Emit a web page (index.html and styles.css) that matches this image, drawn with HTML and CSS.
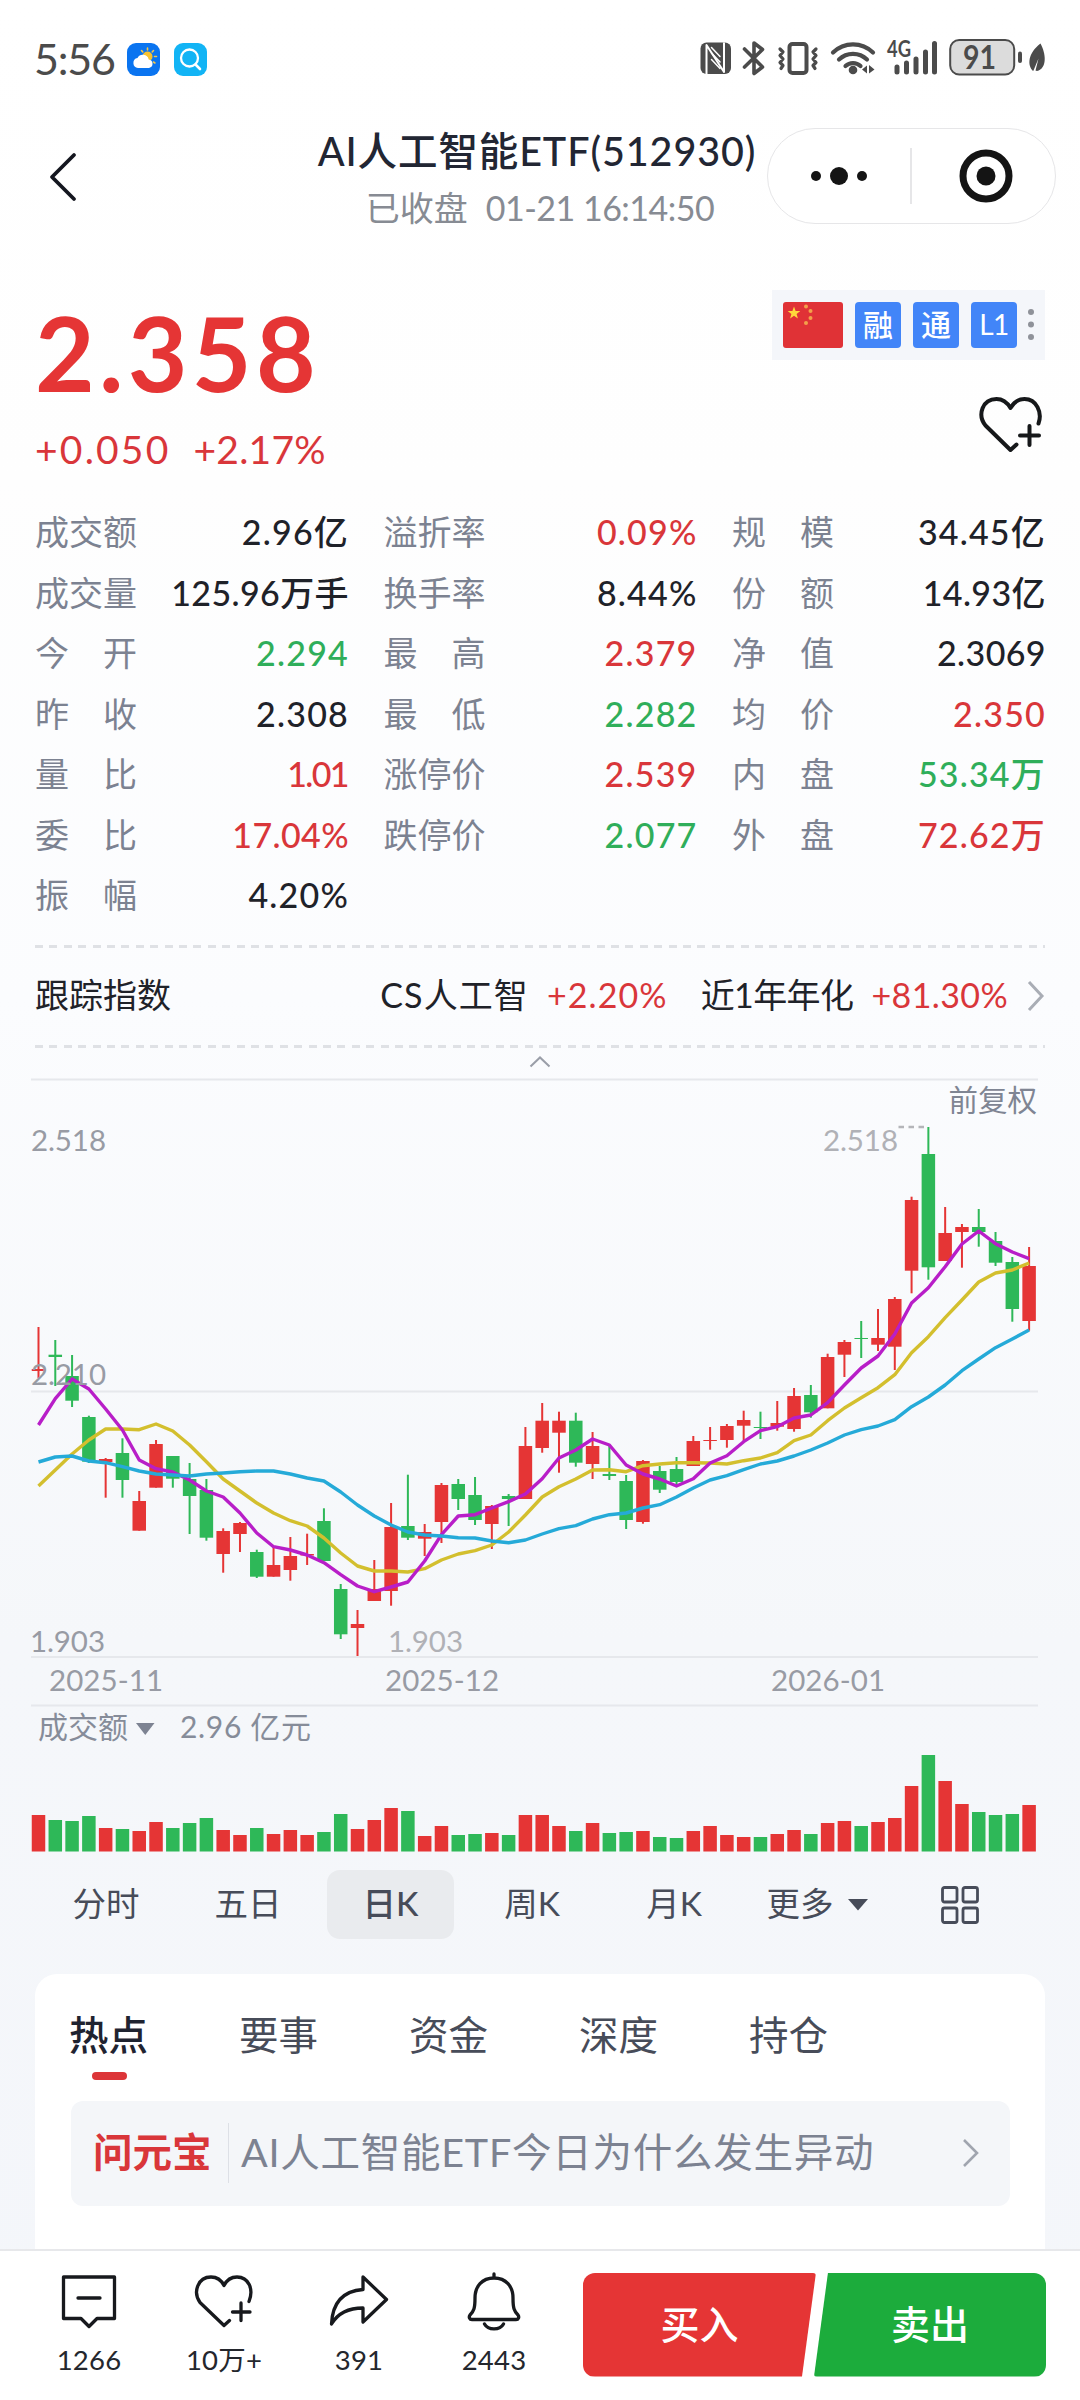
FILE: index.html
```html
<!DOCTYPE html>
<html lang="zh-CN">
<head>
<meta charset="utf-8">
<title>AI人工智能ETF(512930)</title>
<link rel="stylesheet" href="styles.css">
</head>
<body>
<div class="page">
  <div class="status">
    <span class="clock">5:56</span>
    <svg class="app" viewBox="0 0 33 33"><rect width="33" height="33" rx="9" fill="#0a74f0"/><g stroke="#f6c646" stroke-width="1.6" stroke-linecap="round"><path d="M20.500 5v2M14.500 7.500l1.300 1.500M26.500 7.500l-1.300 1.500M27.500 13.500h2M26.500 19l1.400 1"/></g><circle cx="20.500" cy="13.500" r="5" fill="#f8c22f"/><path d="M11 25a5 5 0 0 1-.5-9.900 6 6 0 0 1 11.200 1.400A4.300 4.300 0 0 1 22 25z" fill="#fff"/></svg>
    <svg class="app" viewBox="0 0 33 33"><rect width="33" height="33" rx="9" fill="#12b4f5"/><circle cx="15.500" cy="15" r="8.500" fill="none" stroke="#fff" stroke-width="2.300"/><path d="M21.500 21.500l4.500 4.500" stroke="#fff" stroke-width="2.600" stroke-linecap="round"/></svg>
    <svg class="signals" viewBox="698 36 350 44" fill="none" stroke="#4b4b4b" stroke-linecap="round" stroke-linejoin="round">
      <rect x="700.500" y="42.500" width="30.500" height="31.500" rx="6" fill="#4b4b4b" stroke="none"/>
      <path d="M706.500 74V45l17.500 27V42.500" stroke="#fff" stroke-width="2" stroke-linecap="butt"/><path d="M711.500 47.500l8.500 9M711.500 53l8.500 9M711.500 59.500l8.500 9" stroke="#fff" stroke-width="1.500"/>
      <path d="M744.500 49l18 18-8.500 6.500V43l8.500 6.500-18 17.500" stroke-width="3.600"/>
      <rect x="789.500" y="44" width="17" height="29" rx="3" stroke-width="4"/>
      <path d="M780 49l3 3-3 3.500 3 3.500-3 3.500 3 3-2 3M816 49l-3 3 3 3.500-3 3.500 3 3.500-3 3 2 3" stroke-width="3.200"/>
      <path d="M833 52.500a28.500 28.500 0 0 1 40 0M839 59.500a20 20 0 0 1 28 0M845.500 66a11 11 0 0 1 15 0" stroke-width="4.200"/>
      <circle cx="853" cy="70" r="4.300" fill="#4b4b4b" stroke="none"/><path d="M867 65.500v8l-5-4zM869 65l5.500 4.500-5.500 4z" fill="#4b4b4b" stroke="none"/>
      <path d="M897 67v5M906.500 63v9M916 59v13M925.500 52v20M934.500 43.500v28.500" stroke-width="5"/>
      <rect x="950.200" y="40" width="64" height="34.500" rx="9" fill="#dcdcdc" stroke-width="2"/>
      <path d="M1020 53.500v7.500" stroke-width="4"/>
      <path d="M1033 71c-6-6-5-18 7.500-27.500 5.500 10 7 25-3.500 27.500l-1.500-.5 3-12-5 12z" fill="#4b4b4b" stroke="none"/>
      <text x="887" y="57" class="net" textLength="24" lengthAdjust="spacingAndGlyphs">4G</text>
      <text x="963" y="68.500" class="batt" textLength="33" lengthAdjust="spacingAndGlyphs">91</text>
    </svg>
  </div>

  <header class="header">
    <svg class="back" viewBox="0 0 34 54"><path d="M29 5L7 27l22 22" fill="none" stroke="#14161f" stroke-width="3.800" stroke-linecap="round" stroke-linejoin="round"/></svg>
    <div class="heading">
      <h1 class="name">AI人工智能ETF(512930)</h1>
      <p class="time"><span>已收盘</span><span>01-21 16:14:50</span></p>
    </div>
    <div class="capsule">
      <svg viewBox="0 0 50 20"><circle cx="6" cy="10" r="5"/><circle cx="29" cy="10" r="9"/><circle cx="52" cy="10" r="5"/></svg>
      <i class="split"></i>
      <svg class="ring" viewBox="0 0 54 54"><circle cx="27" cy="27" r="23" fill="none" stroke="#141414" stroke-width="7"/><circle cx="27" cy="27" r="9.500"/></svg>
    </div>
  </header>

  <section class="quote">
    <div>
      <div class="price">2.358</div>
      <div class="change"><span>+0.050</span><span class="pct">+2.17%</span></div>
    </div>
    <div class="side">
      <div class="badges">
        <svg class="flag" viewBox="0 0 60 46"><rect width="60" height="46" rx="3" fill="#e03236"/><path d="M11 4.500l1.600 4.400 4.700.1-3.700 2.900 1.300 4.500-3.900-2.600-3.900 2.600 1.300-4.500-3.700-2.900 4.700-.1z" fill="#ffd83b"/><g fill="#f3a04a"><circle cx="23" cy="4.500" r="2"/><circle cx="27.500" cy="9" r="2"/><circle cx="27.500" cy="16" r="2"/><circle cx="23" cy="21" r="2"/></g></svg>
        <span class="badge">融</span><span class="badge">通</span><span class="badge level">L1</span>
        <svg class="dots" viewBox="0 0 6 34"><circle cx="3" cy="4" r="3"/><circle cx="3" cy="16.500" r="3"/><circle cx="3" cy="29" r="3"/></svg>
      </div>
      <svg class="fav" viewBox="0 0 68 62"><path d="M61.500 29.500c4-11-2-24.500-14-24.500-6 0-11 4-14 9-3-5-8-9-14-9C5.500 5 0 21 8.500 31.500L33.500 56l6-5.500M52.500 32v19M43 41.500h19" fill="none" stroke="#16181a" stroke-width="4" stroke-linecap="round" stroke-linejoin="round"/></svg>
    </div>
  </section>

  <section class="stats">
    <div class="stat"><span class="k">成交额</span><span class="v">2.96亿</span></div>
    <div class="stat"><span class="k">溢折率</span><span class="v up">0.09%</span></div>
    <div class="stat"><span class="k"><b>规</b><b>模</b></span><span class="v">34.45亿</span></div>
    <div class="stat"><span class="k">成交量</span><span class="v snug">125.96万手</span></div>
    <div class="stat"><span class="k">换手率</span><span class="v">8.44%</span></div>
    <div class="stat"><span class="k"><b>份</b><b>额</b></span><span class="v snug">14.93亿</span></div>
    <div class="stat"><span class="k"><b>今</b><b>开</b></span><span class="v down">2.294</span></div>
    <div class="stat"><span class="k"><b>最</b><b>高</b></span><span class="v up">2.379</span></div>
    <div class="stat"><span class="k"><b>净</b><b>值</b></span><span class="v snug">2.3069</span></div>
    <div class="stat"><span class="k"><b>昨</b><b>收</b></span><span class="v">2.308</span></div>
    <div class="stat"><span class="k"><b>最</b><b>低</b></span><span class="v down">2.282</span></div>
    <div class="stat"><span class="k"><b>均</b><b>价</b></span><span class="v up">2.350</span></div>
    <div class="stat"><span class="k"><b>量</b><b>比</b></span><span class="v up tight">1.01</span></div>
    <div class="stat"><span class="k">涨停价</span><span class="v up">2.539</span></div>
    <div class="stat"><span class="k"><b>内</b><b>盘</b></span><span class="v down">53.34万</span></div>
    <div class="stat"><span class="k"><b>委</b><b>比</b></span><span class="v up snug">17.04%</span></div>
    <div class="stat"><span class="k">跌停价</span><span class="v down">2.077</span></div>
    <div class="stat"><span class="k"><b>外</b><b>盘</b></span><span class="v up">72.62万</span></div>
    <div class="stat"><span class="k"><b>振</b><b>幅</b></span><span class="v">4.20%</span></div>
  </section>

  <section class="track">
    <span class="track-name">跟踪指数</span>
    <span class="pair index"><span>CS人工智</span><span class="up">+2.20%</span></span>
    <span class="pair year"><span>近1年年化</span><span class="up">+81.30%</span></span>
    <svg class="more" viewBox="0 0 18 32"><path d="M2 2l13 14L2 30" fill="none" stroke="#a9adb5" stroke-width="3"/></svg>
  </section>
  <div class="fold"><svg viewBox="0 0 22 12"><path d="M1.500 10.500L11 1.500l9.500 9" fill="none" stroke="#9a9ea8" stroke-width="2"/></svg></div>

  <svg class="chart" viewBox="0 1078 1080 778">
    <g class="grid"><path d="M31 1079.500H1038M31 1391.500H1038M31 1657H1038M31 1705.500H1038"/></g>
    <g id="candles"></g>
    <g id="averages"></g>
    <g id="volume"></g>
    <g class="axis">
      <text x="31" y="1150.500" textLength="75">2.518</text>
      <text x="31" y="1385" textLength="75">2.210</text>
      <text x="30" y="1651.500" textLength="75">1.903</text>
      <text x="49" y="1690.500" textLength="114">2025-11</text>
      <text x="385" y="1690.500" textLength="114">2025-12</text>
      <text x="771" y="1690.500" textLength="114">2026-01</text>
    </g>
    <g class="axis peak">
      <text x="823" y="1150.500" textLength="75">2.518</text>
      <text x="388" y="1651.500" textLength="75">1.903</text>
      <path d="M898.500 1127h27" stroke="#b4b5b9" stroke-width="2.500" stroke-dasharray="5.500 4.500"/>
    </g>
    <text x="948.500" y="1111" class="adjust">前复权</text>
    <text x="38" y="1738" class="legend">成交额</text>
    <path d="M136 1723h18.500l-9.250 12z" fill="#7d8392"/>
    <text x="180" y="1738" class="legend" textLength="131">2.96 亿元</text>
  </svg>

  <nav class="periods">
    <span>分时</span><span>五日</span><span class="on">日K</span><span>周K</span><span>月K</span>
    <span class="menu">更多<svg viewBox="0 0 22 12"><path d="M1 0h20L11 11.500z" fill="#474c59"/></svg></span>
    <span class="grid-btn"><svg class="tiles" viewBox="0 0 38 38" fill="none" stroke="#474c59" stroke-width="2.800"><rect x="1.500" y="1.500" width="14.500" height="14.500" rx="2"/><rect x="22" y="1.500" width="14.500" height="14.500" rx="2"/><rect x="1.500" y="22" width="14.500" height="14.500" rx="2"/><rect x="22" y="22" width="14.500" height="14.500" rx="2"/></svg></span>
  </nav>

  <section class="card">
    <nav class="topics"><span class="on">热点</span><span>要事</span><span>资金</span><span>深度</span><span>持仓</span></nav>
    <div class="ask">
      <span class="ask-name">问元宝</span><span class="ask-text">AI人工智能ETF今日为什么发生异动</span>
      <svg viewBox="0 0 18 30"><path d="M2 2l13 13L2 28" fill="none" stroke="#a0a5af" stroke-width="2.600"/></svg>
    </div>
  </section>

  <footer class="bar">
    <div class="act"><svg viewBox="0 0 60 60"><path d="M4.500 5h51v41.500H38L30 54.500 22 46.500H4.500zM19 26h22"/></svg><span>1266</span></div>
    <div class="act"><svg viewBox="0 0 60 60"><path d="M55 29.500C60 17 54.500 5 43 5c-6 0-10.500 3.500-13 8.500C27.500 8.500 23 5 17 5 4 5-1.500 20 6 30.500L30 53.500l5.500-5M47 31v17.500M38.500 40h17.500"/></svg><span>10万+</span></div>
    <div class="act"><svg viewBox="0 0 60 60"><path d="M34 5l23.500 22.500L34 50V36C20 36 9 41 2.500 52 3.500 31 14 19 34 17.500z"/></svg><span>391</span></div>
    <div class="act"><svg viewBox="0 0 60 60"><path d="M30 2v4M30 6C18 6 11 14.500 11 26c0 10-1 13-5 17-1.500 2-.5 4.500 2 4.500h44c2.500 0 3.500-2.500 2-4.500-4-4-5-7-5-17C49 14.500 42 6 30 6zM20.500 52c3.500 6.500 15.500 6.500 19 0"/></svg><span>2443</span></div>
    <div class="trade"><span class="buy">买入</span><span class="sell">卖出</span></div>
  </footer>
</div>
<script src="chart.js"></script>
</body>
</html>
```

FILE: styles.css
```css
* { box-sizing: border-box; }
body {
  margin: 0;
  font-family: Lato, "Noto Sans CJK SC", sans-serif;
  font-size: 34px;
  color: #1f2229;
}
h1, p { margin: 0; font-weight: 400; }
svg { display: block; flex: none; }
.page {
  width: 1080px;
  height: 2400px;
  overflow: hidden;
  display: flex;
  flex-direction: column;
  background: linear-gradient(#fff 0, #fefefe 480px, #fbfcfe 1000px, #f5f7fa 1640px, #f4f6fa 2400px);
}
.page > * { flex: none; }
.up { color: #d9363a; }
.down { color: #2fae5a; }

.status { height: 118px; display: flex; align-items: center; padding: 0 32px 0 34px; }
.clock { font-size: 43px; color: #4b4b4b; width: 93px; letter-spacing: -1.2px; line-height: 50px; }
.app { width: 33px; height: 33px; margin-right: 14px; }
.signals { width: 350px; height: 44px; margin-left: auto; margin-top: -2px; }
.net { font-size: 22px; font-weight: 700; fill: #4b4b4b; stroke: none; }
.batt { font-size: 33px; font-weight: 700; fill: #4b4b4b; stroke: none; }

.header { height: 116px; display: flex; align-items: center; }
.back { width: 34px; height: 54px; margin: 2px 228px 0 45px; }
.heading { width: 460px; text-align: center; white-space: nowrap; padding-top: 6px; }
.name { font-size: 39.5px; line-height: 57px; font-weight: 500; color: #222633; letter-spacing: .9px; }
.time { display: flex; justify-content: center; gap: 18px; line-height: 57px; padding-left: 6px; color: #878b93; }
.time span + span { letter-spacing: -.5px; }
.capsule {
  width: 289px; height: 96px; border: 1.5px solid #e6e6e8; border-radius: 48px; background: #fff;
  display: flex; align-items: center; justify-content: space-between; padding: 0 42px; fill: #141414;
}
.capsule svg { width: 50px; height: 20px; overflow: visible; }
.capsule .ring { width: 54px; height: 54px; margin-right: 0; }
.split { width: 1.5px; height: 56px; background: #e6e6e8; margin-left: 3px; }

.quote { display: flex; justify-content: space-between; padding: 56px 35px 0; height: 242px; }
.price { margin-top: 7px; font-size: 103px; line-height: 110px; font-weight: 700; color: #e53535; letter-spacing: 4.3px; }
.change { margin-top: 17px; display: flex; gap: 23px; font-size: 39px; line-height: 50px; color: #d9363a; letter-spacing: 2.2px; }
.change .pct { letter-spacing: .2px; }
.side { display: flex; flex-direction: column; align-items: flex-end; }
.badges { width: 273px; height: 70px; background: #f4f6fa; display: flex; align-items: center; gap: 12px; padding-left: 11px; }
.flag { width: 60px; height: 46px; }
.badge { width: 46px; height: 46px; border-radius: 4px; background: #4285f8; color: #fff; font-size: 30px; line-height: 44px; text-align: center; font-weight: 500; }
.level { font-size: 28px; font-weight: 400; letter-spacing: -.5px; }
.dots { width: 6px; height: 34px; fill: #8f9299; margin-left: -1px; }
.fav { width: 68px; height: 62px; margin-top: 34px; }

.stats { display: grid; grid-template-columns: repeat(3, 313px); column-gap: 35.5px; grid-auto-rows: 60.5px; padding: 0 35px; margin-top: 26px; }
.stat { display: flex; justify-content: space-between; align-items: center; line-height: 60px; }
.k { width: 102px; display: flex; justify-content: space-between; color: #7c8291; white-space: nowrap; }
.k b { font-weight: 400; }
.v { letter-spacing: 1.2px; white-space: nowrap; margin-right: -1px; font-weight: 500; }
.v.snug { letter-spacing: .4px; }
.v.tight { letter-spacing: -1.6px; margin-right: 0; }

.track {
  margin: 19px 35px 0; height: 103px; display: flex; align-items: center; line-height: 50px; padding-bottom: 2px;
  background-image: repeating-linear-gradient(90deg, #dfe1e5 0 8px, transparent 8px 14.400px), repeating-linear-gradient(90deg, #dfe1e5 0 8px, transparent 8px 14.400px);
  background-size: 100% 3px; background-position: 0 0, 0 100%; background-repeat: no-repeat;
}
.track-name { width: 346px; }
.pair { display: flex; gap: 18px; white-space: nowrap; }
.pair.index { width: 321px; letter-spacing: 1.1px; }
.pair.year { width: 327px; letter-spacing: -.6px; }
.pair.year .up { letter-spacing: .4px; }
.more { width: 18px; height: 32px; margin-top: 2px; }
.fold { height: 30px; display: flex; justify-content: center; align-items: center; }
.fold svg { width: 22px; height: 12px; margin-top: -1px; }

.chart { width: 1080px; height: 778px; }
.grid { stroke: #e6e8ec; stroke-width: 2; fill: none; }
.axis { font-size: 29.5px; fill: #989ba4; }
.axis.peak { fill: #b0b1b6; }
.adjust { font-size: 29.500px; fill: #7f8593; }
.legend { font-size: 30px; fill: #868c99; }
.avg { fill: none; stroke-width: 3.400; stroke-linejoin: round; }

.periods { margin: 14px 35px 0; height: 69px; display: flex; color: #474c59; line-height: 65px; font-size: 33.500px; }
.periods > span { width: 142px; padding-bottom: 2px; display: flex; justify-content: center; align-items: center; }
.periods > .on { width: 127px; margin: 0 7px 0 8px; background: #e9ebee; border-radius: 13px; font-weight: 500; }
.menu svg { width: 22px; height: 12px; margin: 4px 0 0 13px; }
.periods > .menu { padding-left: 3px; }
.periods > .grid-btn { padding-left: 4px; }
.tiles { width: 38px; height: 38px; margin-top: 3px; }

.card { margin: 35px 35px 0; height: 275px; background: #fff; border-radius: 22px 22px 0 0; padding: 32px 35px 0 36px; }
.topics { display: flex; font-size: 39.500px; line-height: 58px; color: #474c59; height: 95px; margin-left: -2px; }
.topics span { width: 170px; }
.topics .on { color: #1f2330; font-weight: 500; }
.topics .on::after { content: ""; display: block; width: 35px; height: 8px; border-radius: 4px; background: #dc3538; margin: 8px 0 0 23px; }
.ask { height: 105px; border-radius: 12px; background: #f4f6f9; display: flex; align-items: center; padding: 0 30px 0 22px; font-size: 39.500px; white-space: nowrap; }
.ask-name { width: 136px; color: #d9363a; font-weight: 600; line-height: 58px; padding-bottom: 2px; border-right: 1.5px solid #dde0e6; }
.ask-text { flex: 1; padding: 0 0 2px 12px; color: #7c8291; line-height: 58px; letter-spacing: .75px; }
.ask svg { width: 18px; height: 30px; }

.bar { height: 151px; background: #fff; border-top: 2px solid #e7e8eb; display: flex; padding-left: 21.5px; }
.act { width: 135px; display: flex; flex-direction: column; align-items: center; padding-top: 21px; font-size: 27.500px; line-height: 36px; color: #24272d; letter-spacing: .2px; }
.act svg { width: 60px; height: 60px; margin-bottom: 10px; fill: none; stroke: #17191d; stroke-width: 3.300; stroke-linejoin: round; stroke-linecap: round; }
.trade { display: flex; margin: 22px 0 0 21.500px; height: 104px; color: #fff; font-size: 39px; font-weight: 500; line-height: 102px; text-align: center; }
.buy { width: 233px; background: #e53535; border-radius: 12px 3px 3px 12px; clip-path: polygon(0 0, 100% 0, calc(100% - 14px) 100%, 0 100%); }
.sell { width: 232px; margin-left: -2px; background: #1cac3c; border-radius: 3px 12px 12px 3px; clip-path: polygon(14px 0, 100% 0, 100% 100%, 0 100%); }
```

FILE: chart.js
```javascript
const NS = 'http://www.w3.org/2000/svg';
const RED = '#e53535', GREEN = '#2eb858';
const X0 = 38.5, STEP = 16.79, BODY = 13.5;
const BASE = 1851.5;

// [direction, high, body top, body bottom, low, volume top]
const days = [
  ['r',1327,1369,1371,1378,1815],['g',1340,1354.7,1357,1386,1820],['g',1355,1376,1400.7,1407,1821],
  ['g',1415.7,1417,1461.7,1463,1816],['r',1458,1459,1462,1497.7,1828],['g',1438.3,1453,1480,1497.7,1829],
  ['r',1491,1501,1530.7,1530.7,1831],['r',1440,1444,1487.7,1487.7,1822],['g',1456,1456,1478.7,1487.7,1828],
  ['g',1463,1479,1496,1534,1823],['g',1479,1490,1537.7,1540.7,1818],['r',1528.3,1531,1554,1572.7,1830],
  ['r',1522,1523,1534,1552,1835],['g',1549.7,1552,1576.7,1578,1828],['r',1546.7,1565,1576.7,1576.7,1834],
  ['r',1537,1556,1570,1580.7,1830],['r',1533.7,1554,1555.5,1565,1835],['g',1508.3,1521,1561,1561,1832],
  ['g',1584,1589,1634.3,1639,1814],['r',1610,1624,1628,1656,1829],['r',1560,1589,1601,1601,1820],
  ['r',1503,1527,1591,1605.7,1808],['g',1474.7,1526,1537.7,1540,1811],['r',1524,1532,1538.7,1556,1836],
  ['r',1483,1485,1522,1543,1826],['g',1479,1484,1499,1510,1835],['g',1477,1495,1520,1525,1834],
  ['r',1505,1506,1524,1549,1833],['g',1494,1496,1499,1526,1835],['r',1427,1446,1499,1499,1815],
  ['r',1403,1420.7,1448,1452.7,1815],['r',1411.7,1420.7,1432.7,1472.7,1826],['g',1412.7,1420.7,1462.7,1466.7,1831],
  ['r',1432,1446,1464,1479,1823],['g',1446,1474,1476,1480,1833],['g',1475,1481,1520,1529,1832],
  ['r',1460,1461,1522,1523.7,1831],['g',1466,1471,1489.7,1493,1837],['g',1457,1469,1482,1485,1838],
  ['r',1436,1441,1466,1466,1831],['r',1427,1440,1441,1449.7,1826],['r',1424,1426,1440,1447.7,1835],
  ['r',1410.7,1420,1425.7,1441.7,1837],['g',1411.7,1427,1428,1439,1837],['r',1401,1423,1426.7,1430.7,1834],
  ['r',1388,1396,1429,1431.7,1830],['g',1385,1395,1412.3,1417.7,1834],['r',1353.7,1357,1408.3,1408.3,1823],
  ['r',1340,1342,1354.7,1377,1821],['g',1321,1338,1339,1358,1826],['r',1309,1338,1344.7,1351,1822],
  ['r',1297,1299,1346.7,1370,1818],['r',1196.7,1200,1270.7,1293.3,1786],['g',1127,1154,1267.3,1279.7,1755],
  ['r',1207,1233,1261,1261,1781],['r',1224,1227,1232,1267.7,1804],['g',1209,1227,1232,1246.7,1812],
  ['g',1232,1241,1262.7,1266,1815],['g',1257,1262,1309,1321.7,1814],['r',1247,1266,1321,1330.7,1805]
];

const averages = {
  '#d3bf2e': [1486,1470,1454,1440,1429,1429,1429.7,1424,1431,1445,1461.7,1479,1491,1503,1513,1520.7,1526,1538,1553,1566,1571,1571,1572,1568.7,1560,1554,1550.7,1545,1532,1515,1497,1486.7,1479,1470,1469.7,1471.7,1465.7,1464,1462.7,1462.7,1463,1464,1460.7,1458,1452.7,1440.7,1435,1420.7,1408,1397.7,1387.7,1374.7,1352.7,1336.7,1317.7,1300,1282,1273,1270,1263],
  '#b81ec8': [1425,1398.7,1379,1389,1409,1430,1460,1468.7,1472,1480,1491,1497,1513,1533,1546.7,1550,1555,1562.7,1574.7,1586,1591.7,1587,1582,1561,1534.7,1516,1514.7,1508,1501.7,1494,1478.7,1458,1450,1439,1445,1465,1474,1479,1486,1478.7,1463,1455.7,1441.7,1430.7,1426.7,1418,1415,1402.7,1385,1368,1356,1334,1303,1287.7,1266.7,1244,1231,1243.7,1252,1258.7],
  '#25aad8': [1462,1457,1456,1461,1462.7,1466.7,1471,1474,1475,1476,1474,1473,1471.7,1471,1471,1474,1478,1481,1492,1505,1516,1525,1532,1535,1536,1537.7,1538,1541,1542.7,1540,1534,1528.7,1525.7,1519,1514.7,1513,1508,1504.7,1497,1488,1480,1475.7,1469.7,1464,1461,1456,1450,1443,1435,1429.7,1426,1419.7,1406.7,1397,1385,1370.7,1359,1347.7,1339,1330]
};

function add(parent, tag, attrs) {
  const el = document.createElementNS(NS, tag);
  for (const key in attrs) el.setAttribute(key, attrs[key]);
  parent.appendChild(el);
}
function box(parent, x, w, top, bottom, fill) {
  add(parent, 'rect', { x: x - w / 2, y: top, width: w, height: bottom - top, fill });
}

const candles = document.getElementById('candles');
const volume = document.getElementById('volume');
days.forEach(([dir, high, top, bottom, low, vol], i) => {
  const x = X0 + STEP * i, fill = dir === 'r' ? RED : GREEN;
  box(candles, x, 2, high, low, fill);
  box(candles, x, BODY, top, bottom, fill);
  box(volume, x, BODY, vol, BASE, fill);
});
for (const color in averages) {
  const points = averages[color].map((y, i) => `${X0 + STEP * i},${y}`).join(' ');
  add(document.getElementById('averages'), 'polyline', { points, class: 'avg', stroke: color });
}
```
